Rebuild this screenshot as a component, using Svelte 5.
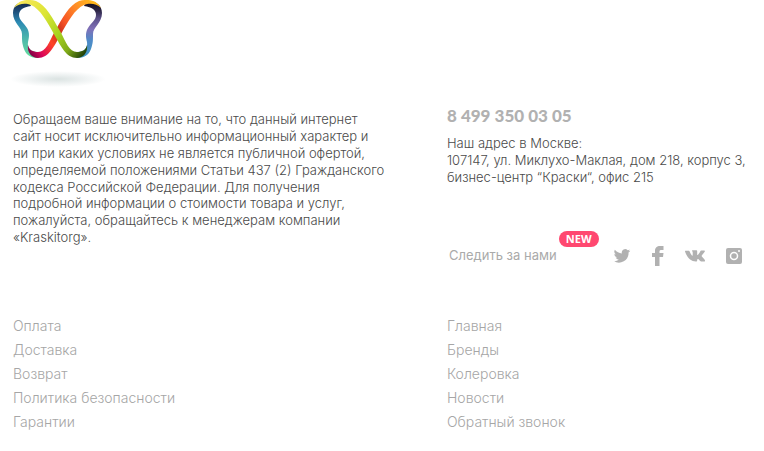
<script>
  const info = ['Оплата', 'Доставка', 'Возврат', 'Политика безопасности', 'Гарантии'];
  const pages = ['Главная', 'Бренды', 'Колеровка', 'Новости', 'Обратный звонок'];

  // Each half of the butterfly is one wing and one crossing band; the left half mirrors the right.
  const wing = 'M86 2C92 0 102 3 102 13C102 23 93 27 93 34C93 41 93 43 91 49C89 55 84 58 77 58L77 52C84 52 88 48 87 42C86 38 85 33 88 28C91 23 96 20 96 15C96 10 92 7 84 6Z';
  const band = 'M101 8C96 -1 87 -1 79 1C69 5 62 19 55 31C49 42 46 52 38 52C33 52 29 50 28 45C27 52 31 58 38 58C49 58 54 46 60 36C68 21 75 9 84 5C89 3 96 3 101 8Z';
</script>

<footer>
  <a class="logo" href="/" aria-label="Kraskitorg">
    <svg width="96" height="90" viewBox="10 0 96 90">
      <defs>
        <linearGradient id="teal" gradientUnits="userSpaceOnUse" x1="88" y1="4" x2="87" y2="56">
          <stop offset="0" stop-color="#183052" /><stop offset=".12" stop-color="#1d4a75" />
          <stop offset=".35" stop-color="#2c8ab4" /><stop offset=".65" stop-color="#4bb5ac" />
          <stop offset="1" stop-color="#65dba0" />
        </linearGradient>
        <linearGradient id="violet" gradientUnits="userSpaceOnUse" x1="88" y1="4" x2="87" y2="56">
          <stop offset="0" stop-color="#171226" /><stop offset=".12" stop-color="#2c2545" />
          <stop offset=".28" stop-color="#5d528b" /><stop offset=".48" stop-color="#8070b8" />
          <stop offset=".7" stop-color="#4f8ac8" /><stop offset="1" stop-color="#4197c5" />
        </linearGradient>
        <linearGradient id="fire" gradientUnits="userSpaceOnUse" x1="27" y1="50" x2="92" y2="3">
          <stop offset="0" stop-color="#7c0045" /><stop offset=".12" stop-color="#dc0759" />
          <stop offset=".3" stop-color="#ff4526" /><stop offset=".45" stop-color="#c52e1c" />
          <stop offset=".58" stop-color="#f65224" /><stop offset=".8" stop-color="#ff8b28" />
          <stop offset="1" stop-color="#ffb51c" />
        </linearGradient>
        <linearGradient id="lime" gradientUnits="userSpaceOnUse" x1="27" y1="50" x2="92" y2="3">
          <stop offset="0" stop-color="#1d3d08" /><stop offset=".2" stop-color="#7faa18" />
          <stop offset=".42" stop-color="#a8d320" /><stop offset=".7" stop-color="#dce535" />
          <stop offset="1" stop-color="#f5e755" />
        </linearGradient>
        <radialGradient id="shade">
          <stop offset="0" stop-color="#dbe3e2" /><stop offset=".5" stop-color="#edf1f1" />
          <stop offset="1" stop-color="#fff" />
        </radialGradient>
      </defs>
      <ellipse cx="58" cy="79" rx="48" ry="8" fill="url(#shade)" />
      <path fill="url(#violet)" d={wing} />
      <path fill="url(#teal)" d={wing} transform="translate(115 0) scale(-1 1)" />
      <path fill="url(#fire)" d={band} />
      <path fill="url(#lime)" d={band} transform="translate(115 0) scale(-1 1)" />
    </svg>
  </a>

  <div class="columns about">
    <p class="legal">
      Обращаем ваше внимание на то, что данный интернет<br />
      сайт носит исключительно информационный характер и<br />
      ни при каких условиях не является публичной офертой,<br />
      определяемой положениями Статьи 437 (2) Гражданского<br />
      кодекса Российской Федерации. Для получения<br />
      подробной информации о стоимости товара и услуг,<br />
      пожалуйста, обращайтесь к менеджерам компании<br />
      «Kraskitorg».
    </p>
    <div class="contacts">
      <a class="phone" href="tel:+74993500305">8 499 350 03 05</a>
      <address>
        Наш адрес в Москве:<br />
        107147, ул. Миклухо-Маклая, дом 218, корпус 3,<br />
        бизнес-центр “Краски“, офис 215
      </address>
      <div class="follow">
        <span class="follow-text">Следить за нами<span class="badge">NEW</span></span>
        <div class="social">
          <a href="#twitter" aria-label="Twitter">
            <svg width="18" height="18" viewBox="0 0 24 24"><path d="M23 5.100a9 9 0 0 1-2.600.7 4.500 4.500 0 0 0 2-2.500 9 9 0 0 1-2.900 1.100A4.500 4.500 0 0 0 11.800 8.500 12.800 12.800 0 0 1 2.500 3.800a4.500 4.500 0 0 0 1.400 6 4.500 4.500 0 0 1-2-.6 4.500 4.500 0 0 0 3.600 4.500 4.500 4.500 0 0 1-2 .1 4.500 4.500 0 0 0 4.200 3.100A9 9 0 0 1 1 18.800 12.800 12.800 0 0 0 20.700 7.400 9 9 0 0 0 23 5.100z" /></svg>
          </a>
          <a href="#facebook" aria-label="Facebook">
            <svg width="12" height="20" viewBox="0 0 12 20"><path d="M3 20V11H0V7h3V5C3 1.500 5 0 8 0h3.500v4H9.500C8 4 7.500 4.500 7.500 5.500V7h4L11 11H7.500v9z" /></svg>
          </a>
          <a href="#vk" aria-label="ВКонтакте">
            <svg width="20" height="12" viewBox="0 0 21 12"><path d="M0 1.200C0 .6.400.5 1 .5h2.700c.7 0 .9.200 1.200.9 1 2.500 2.300 4.300 2.800 4.300.3 0 .4-.2.400-1V2.200C8 1.300 7.300 1 7.300.6 7.300.3 7.600 0 8 0h4c.6 0 .8.300.8.900v3.400c0 .5.200.7.400.7.500 0 1.900-2 2.900-4 .2-.5.400-.7 1-.7h3c.8 0 1 .4.700 1-.8 1.700-3.400 4-3.400 4.700 0 .7 3.200 3 3.600 4.700.1.700-.2 1-.9 1h-3.200c-1.200 0-2.200-2.500-3.400-2.500-.5 0-.7.300-.7.900 0 1.100-.2 1.600-1.400 1.600C6 11.700 2.500 8 0 1.200z" /></svg>
          </a>
          <a href="#instagram" aria-label="Instagram">
            <svg width="16" height="16" viewBox="0 0 16 16"><rect width="16" height="16" rx="2" /><circle class="cut" cx="8" cy="8" r="3.500" /><path class="cut" d="M12 3h2" /></svg>
          </a>
        </div>
      </div>
    </div>
  </div>

  <nav class="columns">
    {#each [info, pages] as group}
      <ul>
        {#each group as label}
          <li><a href="#top">{label}</a></li>
        {/each}
      </ul>
    {/each}
  </nav>
</footer>

<style>
  :global(body) {
    background: #fff;
  }
  footer {
    padding: 0 10px 16px 13px;
    font: 300 13px/1.3 Inter, 'Open Sans', sans-serif;
    color: #4a4a4a;
  }
  a {
    color: #a6a6a6;
    text-decoration: none;
  }
  svg {
    display: block;
  }
  .logo {
    display: block;
    width: 96px;
    margin-left: -3px;
  }
  .columns {
    display: grid;
    grid-template-columns: minmax(0, 434fr) minmax(0, 307fr);
  }
  .about {
    padding-top: 21px;
  }
  p {
    margin: 0;
    white-space: nowrap;
  }
  .contacts {
    display: flex;
    flex-direction: column;
  }
  .phone {
    margin-top: -5px;
    color: #b1b1b1;
    font: 900 17px/20px Lato, sans-serif;
  }
  address {
    margin-top: 9px;
    font-style: normal;
    white-space: nowrap;
  }
  .follow {
    display: flex;
    align-items: center;
    justify-content: space-between;
    height: 24px;
    margin-top: 58px;
    padding: 0 12px 0 2px;
    color: #aaa;
  }
  .follow-text {
    position: relative;
    font-weight: 400;
  }
  .badge {
    position: absolute;
    right: -42px;
    bottom: 17px;
    width: 40px;
    border-radius: 8px;
    background: #ff4870;
    color: #fff;
    font: 700 11px/16px 'Open Sans', sans-serif;
    text-align: center;
  }
  .social {
    display: flex;
    align-items: center;
    gap: 21px;
  }
  .social svg {
    fill: #b1b1b1;
  }
  .social .cut {
    fill: none;
    stroke: #fff;
    stroke-width: 1.5;
  }
  nav {
    padding-top: 46px;
    font-size: 14px;
    line-height: 24px;
  }
  ul {
    margin: 0;
    padding: 0;
    list-style: none;
  }
</style>
